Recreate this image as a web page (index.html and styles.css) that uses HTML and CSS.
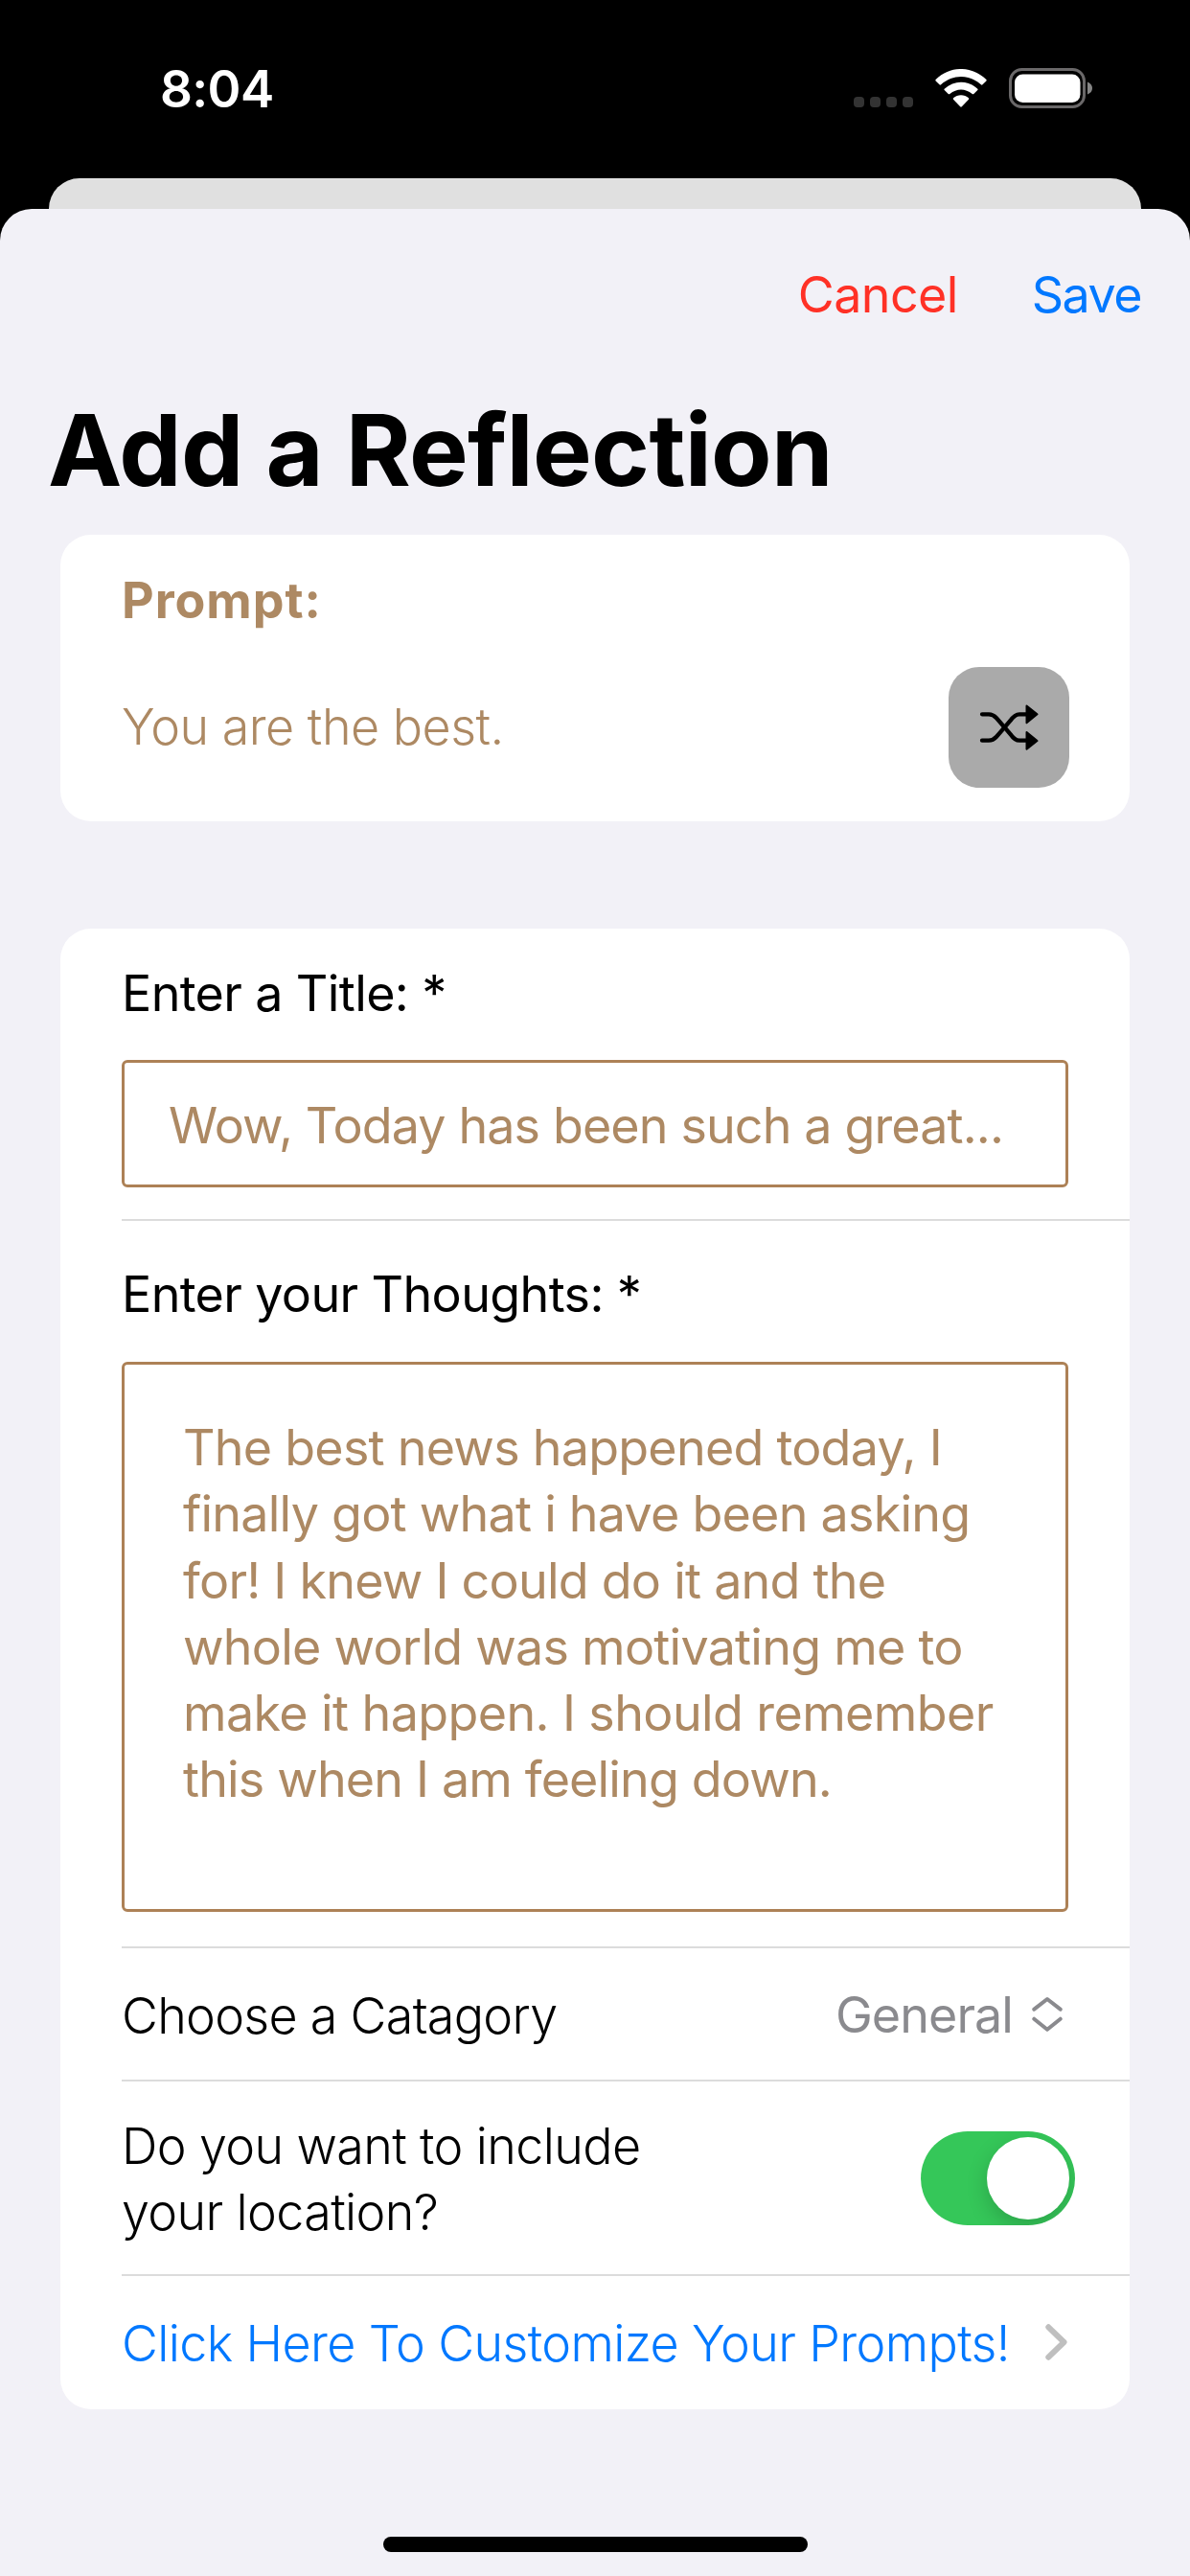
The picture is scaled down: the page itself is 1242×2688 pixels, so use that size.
FILE: index.html
```html
<!DOCTYPE html>
<html lang="en">
<head>
<meta charset="utf-8">
<title>Add a Reflection</title>
<link rel="stylesheet" href="styles.css">
</head>
<body>
<div class="screen">
  <header class="status-bar">
    <span class="time">8:04</span>
    <div class="status-icons">
      <svg class="cellular" width="62" height="11" viewBox="0 0 62 11" fill="#333">
        <rect x="0" width="11" height="11" rx="4"/><rect x="17" width="11" height="11" rx="4"/><rect x="34" width="11" height="11" rx="4"/><rect x="51" width="11" height="11" rx="4"/>
      </svg>
      <svg class="wifi" width="54" height="40" viewBox="0 0 54 40" fill="#fff">
        <path d="M.6 11C16-3.700 38-3.700 53.400 11Q53.900 11.700 53.400 12.400L49.500 16.300Q48.700 17 47.900 16.300C35.500 5.300 18.500 5.300 6.100 16.300Q5.300 17 4.500 16.300L.6 12.400Q.1 11.700 .6 11Z"/>
        <path d="M9.700 20.700C19.800 11.500 34.200 11.500 44.300 20.700Q44.900 21.400 44.300 22.100L40.300 26Q39.500 26.700 38.700 26C31.500 20 22.500 20 15.300 26Q14.500 26.700 13.700 26L9.700 22.100Q9.100 21.400 9.700 20.700Z"/>
        <path d="M19 30.300C23.500 26.200 30.500 26.200 35 30.300Q35.600 31 35 31.700L27.800 39.300Q27 40 26.200 39.300L19 31.700Q18.400 31 19 30.300Z"/>
      </svg>
      <svg class="battery" width="88" height="42" viewBox="0 0 88 42">
        <rect x="2.500" y="1.500" width="77" height="39" rx="12" fill="none" stroke="#6a6869" stroke-width="3"/>
        <rect x="7" y="6.500" width="68.500" height="29.500" rx="8.500" fill="#fff"/>
        <path d="M83 14.500Q88 16.500 88 21T83 27.500Z" fill="#858585"/>
      </svg>
    </div>
  </header>
  <div class="back-card"></div>
  <main class="sheet">
    <nav class="toolbar">
      <a class="cancel">Cancel</a>
      <a class="save">Save</a>
    </nav>
    <h1>Add a Reflection</h1>

    <section class="card prompt-card">
      <h2>Prompt:</h2>
      <div class="prompt-row">
        <p class="prompt-text">You are the best.</p>
        <div class="shuffle">
          <svg width="62" height="50" viewBox="0 0 62 50">
            <g fill="none" stroke="#000" stroke-width="4.300" stroke-linecap="round">
              <path d="M3 11.300H10Q14.500 11.300 18 15.200L32.500 32Q37 38.700 42 38.700H49"/>
              <path d="M3 38.700H10Q14.500 38.700 18 34.800L32.500 18Q37 11.300 42 11.300H49"/>
            </g>
            <g stroke="#000" stroke-width="2" stroke-linejoin="round">
              <path d="M49.500 2.500L60.500 11.300L49.500 20.300Z"/>
              <path d="M49.500 30L60.500 39L49.500 47.700Z"/>
            </g>
          </svg>
        </div>
      </div>
    </section>

    <section class="card form-card">
      <div class="row title-row">
        <label>Enter a Title: *</label>
        <div class="field">Wow, Today has been such a great...</div>
      </div>
      <div class="row thoughts-row">
        <label>Enter your Thoughts: *</label>
        <div class="field area">
          <span>The best news happened today, I</span>
          <span>finally got what i have been asking</span>
          <span>for! I knew I could do it and the</span>
          <span>whole world was motivating me to</span>
          <span class="loose">make it happen. I should remember</span>
          <span class="tight">this when I am feeling down.</span>
        </div>
      </div>
      <div class="row category-row">
        <p class="light category">Choose a Catagory</p>
        <div class="picker">
          <span>General</span>
          <svg width="32" height="38" viewBox="0 0 32 38" fill="none" stroke="#8a8a8e" stroke-width="4" stroke-linecap="round" stroke-linejoin="round">
            <path d="M2.300 13.700L16 3L29.700 13.700M2.300 23.700L16 34.700L29.700 23.700"/>
          </svg>
        </div>
      </div>
      <div class="row location-row">
        <p class="light">Do you want to include<br>your location?</p>
        <div class="toggle"><i class="knob"></i></div>
      </div>
      <div class="row link-row">
        <a class="light link">Click Here To Customize Your Prompts!</a>
        <svg width="23" height="38" viewBox="0 0 23 38" fill="none" stroke="#bfbfbf" stroke-width="6" stroke-linecap="round" stroke-linejoin="round">
          <path d="M3.300 3.300L19.500 19L3.300 34.700"/>
        </svg>
      </div>
    </section>
    <div class="home-indicator"></div>
  </main>
</div>
</body>
</html>
```
FILE: styles.css
```css
* { box-sizing: border-box; }
body, h1, h2, p { margin: 0; }
body {
  background: #000;
  font-family: Inter, "Liberation Sans", sans-serif;
  font-size: 52px;
  line-height: 70px;
  letter-spacing: -0.62px;
  color: #000;
}
svg { display: block; flex: none; }
.screen {
  width: 1242px;
  height: 2688px;
  display: flex;
  flex-direction: column;
  overflow: hidden;
}
.status-bar {
  height: 186px;
  padding: 55px 102px 0 167px;
  display: flex;
  justify-content: space-between;
  align-items: flex-start;
}
.time {
  color: #fff;
  font-size: 53px;
  font-weight: 600;
  line-height: 76px;
}
.status-icons { display: flex; padding-top: 16px; }
.cellular { margin: 30px 23px 0 0; }
.wifi { margin: 1px 22px 0 0; }
.back-card {
  height: 32px;
  margin: 0 51px;
  background: #e0e0e0;
  border-radius: 32px 32px 0 0;
}
.sheet {
  flex: 1;
  background: #f2f1f7;
  border-radius: 33px 33px 0 0;
  display: flex;
  flex-direction: column;
}
.toolbar {
  display: flex;
  justify-content: flex-end;
  gap: 77px;
  padding: 55px 51px 0 0;
}
.cancel { color: #ff3126; }
.save { color: #0078ff; letter-spacing: -1.5px; }
h1 {
  margin: 65px 0 0 50px;
  font-size: 103.7px;
  font-weight: 700;
  line-height: 124px;
  letter-spacing: -0.7px;
}
.card {
  margin: 0 63px;
  background: #fff;
  border-radius: 32px;
}
.prompt-card {
  height: 299px;
  margin-top: 26px;
  padding: 34px 63px 0 64px;
  color: #ad8963;
}
h2 {
  font-size: 52px;
  font-weight: 700;
  letter-spacing: 0.95px;
}
.prompt-row {
  margin-top: 34px;
  display: flex;
  align-items: center;
  justify-content: space-between;
}
.prompt-text { font-weight: 300; letter-spacing: -0.5px; }
.shuffle {
  width: 126px;
  height: 126px;
  border-radius: 32px;
  background: #aaa;
  display: flex;
  align-items: center;
  justify-content: center;
}
.form-card {
  height: 1545px;
  margin-top: 112px;
  padding-left: 64px;
}
.row { border-bottom: 2px solid #dcdcdc; }
.row:last-child { border-bottom: 0; }
.row label { display: block; }
.title-row { height: 305px; padding: 33px 64px 0 0; }
.field {
  height: 133px;
  margin-top: 34px;
  padding: 31px 0 0 46px;
  border: 3px solid #ad8156;
  border-radius: 6px;
  color: #ad8963;
  letter-spacing: -0.87px;
  white-space: nowrap;
}
.thoughts-row { height: 759px; padding: 42px 64px 0 0; }
.area {
  height: 574px;
  margin-top: 35px;
  padding: 52px 0 0 61px;
  line-height: 69.3px;
  letter-spacing: -0.75px;
}
.area span { display: block; }
.area .loose { letter-spacing: -0.6px; }
.area .tight { letter-spacing: -0.84px; }
.light { font-weight: 300; }
.category-row {
  height: 139px;
  padding: 36px 70px 0 0;
  display: flex;
  justify-content: space-between;
  align-items: flex-start;
}
.category { letter-spacing: -0.7px; }
.picker {
  display: flex;
  gap: 20px;
  color: #8a8a8e;
  letter-spacing: -0.92px;
}
.picker span { margin-top: -1px; }
.picker svg { margin-top: 14px; }
.location-row {
  height: 203px;
  padding: 0 57px 0 0;
  display: flex;
  justify-content: space-between;
  align-items: center;
  line-height: 69.3px;
}
.location-row p { padding-top: 3px; }
.toggle {
  width: 161px;
  height: 98px;
  padding: 6px;
  border-radius: 49px;
  background: #35c759;
  display: flex;
  justify-content: flex-end;
  overflow: hidden;
}
.knob {
  width: 86px;
  height: 86px;
  border-radius: 50%;
  background: #fff;
  box-shadow: 0 8px 22px rgba(0, 0, 0, .18);
}
.link-row {
  height: 139px;
  padding: 36px 65px 0 0;
  display: flex;
  justify-content: space-between;
  align-items: flex-start;
}
.link { color: #0078ff; }
.link-row svg { margin-top: 14px; }
.home-indicator {
  width: 443px;
  height: 16px;
  margin: 133px auto 0;
  border-radius: 8px;
  background: #000;
}
```
